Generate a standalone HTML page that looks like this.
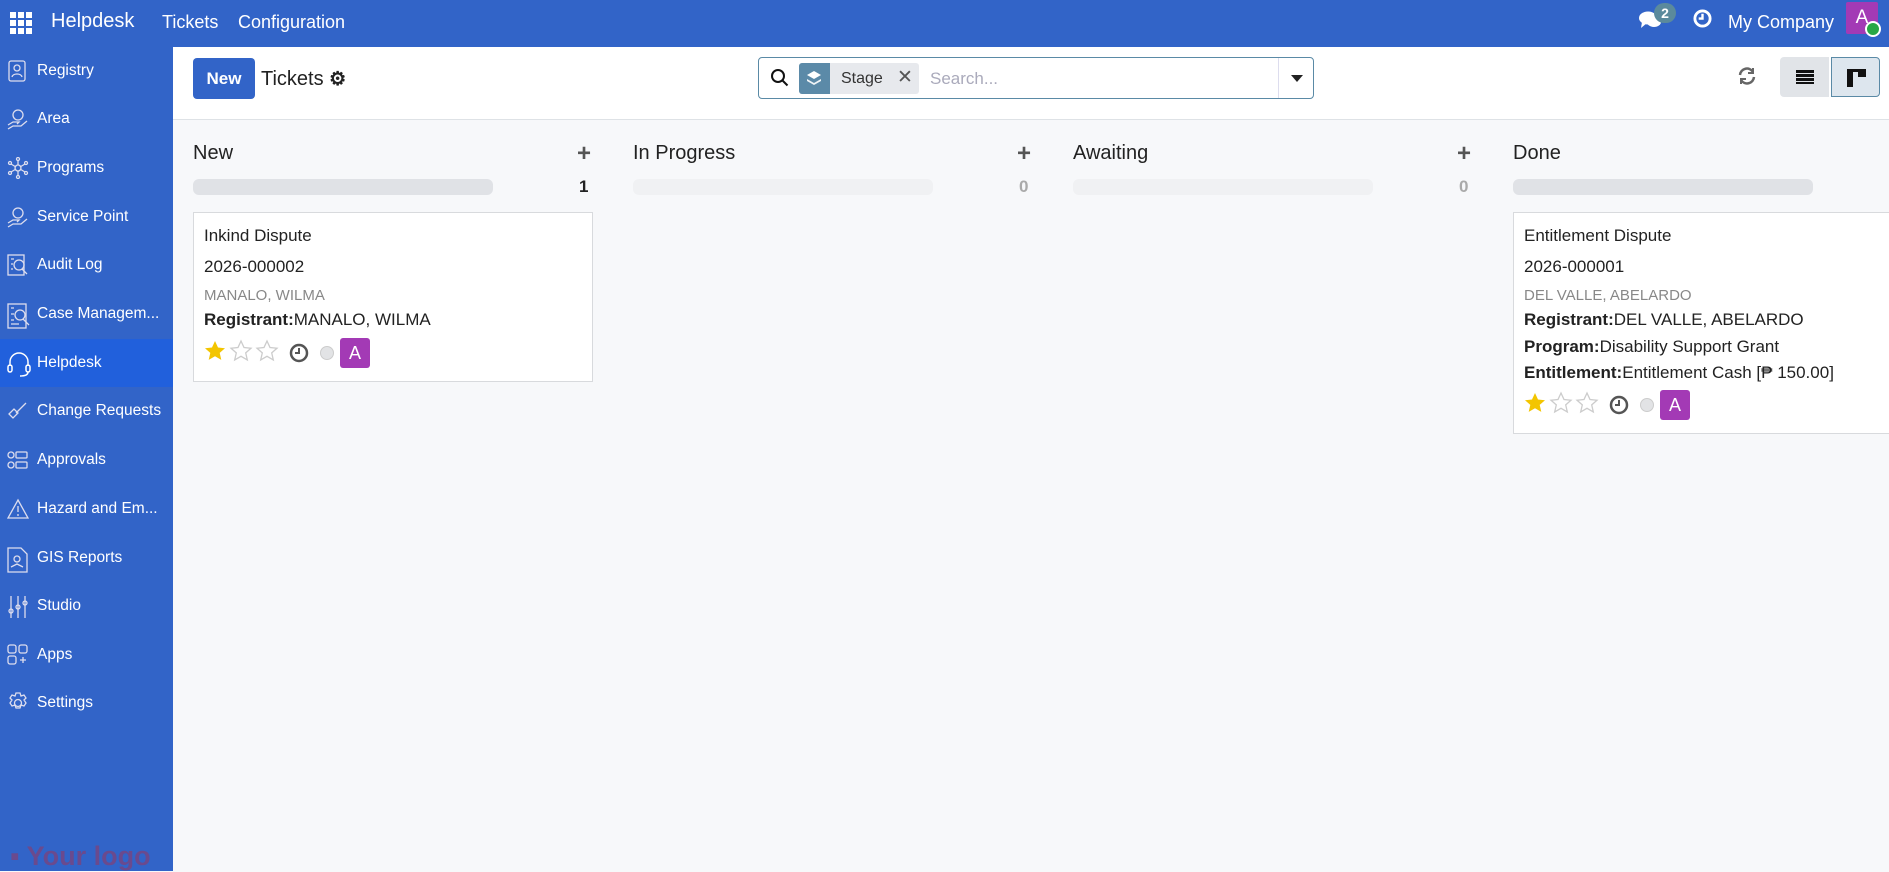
<!DOCTYPE html>
<html><head><meta charset="utf-8"><style>
*{box-sizing:border-box;margin:0;padding:0}
body{width:1889px;height:871px;overflow:hidden;font-family:"Liberation Sans",sans-serif;background:#f7f8fa;position:relative;color:#222}
.top{position:absolute;left:0;top:0;width:1889px;height:47px;background:#3264c8;color:#fff}
.top span{position:absolute;top:12px;font-size:18px}
.side{position:absolute;left:0;top:47px;width:173px;height:824px;background:#3264c8;color:#fff}
.si{position:absolute;left:0;width:173px;height:48px;font-size:15.5px;line-height:48px;padding-left:37px;white-space:nowrap}
.si svg{position:absolute;left:7px;top:13px}
.si.act{background:#2160dc}
.cp{position:absolute;left:173px;top:47px;width:1716px;height:73px;background:#fff;border-bottom:1px solid #dee2e6}
.col{position:absolute;top:120px;width:400px}
.ch{position:absolute;top:22px;left:0;font-size:20px;font-weight:500;color:#222}
.plus{position:absolute;top:20px;left:384px;font-size:24px;font-weight:bold;color:#555}
.bar{position:absolute;top:59px;left:0;width:300px;height:16px;border-radius:6px;background:#e0e2e6}
.bar.l{background:#f0f1f3}
.cnt{position:absolute;top:57px;left:386px;font-size:17px;font-weight:bold;color:#222}
.cnt.z{color:#aaa}
.card{position:absolute;top:92px;left:0;width:400px;background:#fff;border:1px solid #d8dadd;padding:10px 10px 0 10px;font-size:17px;color:#222}
.card div{white-space:nowrap}
.card b{font-weight:bold}
.foot{height:44px;position:relative}
</style></head><body>
<div class="top">
<svg style="position:absolute;left:10px;top:12px" width="22" height="22" viewBox="0 0 22 22" fill="#fff"><rect x="0" y="0" width="6" height="6"/><rect x="8" y="0" width="6" height="6"/><rect x="16" y="0" width="6" height="6"/><rect x="0" y="8" width="6" height="6"/><rect x="8" y="8" width="6" height="6"/><rect x="16" y="8" width="6" height="6"/><rect x="0" y="16" width="6" height="6"/><rect x="8" y="16" width="6" height="6"/><rect x="16" y="16" width="6" height="6"/></svg>
<span style="left:51px;font-size:20px;top:10px">Helpdesk</span>
<span style="left:162px">Tickets</span>
<span style="left:238px">Configuration</span>
<svg style="position:absolute;left:1639px;top:9px" width="24" height="22" viewBox="0 0 24 22" fill="#fff"><ellipse cx="9" cy="9" rx="9" ry="6.5"/><path d="M3 13 L2 19 L8 14Z"/><ellipse cx="15" cy="13" rx="7" ry="5"/></svg>
<div style="position:absolute;left:1654px;top:3px;width:22px;height:20px;border-radius:10px;background:#5b8a9c;color:#fff;font-size:14px;font-weight:bold;text-align:center;line-height:20px">2</div>
<svg style="position:absolute;left:1693px;top:9px" width="19" height="19" viewBox="0 0 20 20"><circle cx="10" cy="10" r="8" fill="none" stroke="#fff" stroke-width="3"/><path d="M10 5v5h-4" stroke="#fff" stroke-width="2.5" fill="none"/></svg>
<span style="left:1728px">My Company</span>
<div style="position:absolute;left:1846px;top:2px;width:32px;height:32px;background:#a33ab5;color:#fff;font-size:19px;text-align:center;line-height:32px;border-radius:2px">A</div>
<div style="position:absolute;left:1865px;top:21px;width:16px;height:16px;border-radius:50%;background:#28a745;border:2px solid #fff"></div>
</div>
<div class="side">
<div class="si" style="top:0"><svg width="20" height="22" viewBox="0 0 20 22" fill="none" stroke="#dde" stroke-width="1.3"><rect x="2" y="1" width="16" height="20" rx="2"/><circle cx="10" cy="8" r="3"/><path d="M5 17c1-4 9-4 10 0"/></svg>Registry</div>
<div class="si" style="top:48px"><svg width="22" height="22" viewBox="0 0 22 22" fill="none" stroke="#dde" stroke-width="1.3"><circle cx="11" cy="7" r="5"/><path d="M1 17l5-3h6l-2 2 M1 21l5-3 8 0 6-5"/></svg>Area</div>
<div class="si" style="top:97px"><svg width="22" height="22" viewBox="0 0 22 22" fill="none" stroke="#dde" stroke-width="1.3"><circle cx="11" cy="11" r="3"/><circle cx="11" cy="2" r="1.5"/><circle cx="11" cy="20" r="1.5"/><circle cx="3" cy="6" r="1.5"/><circle cx="19" cy="6" r="1.5"/><circle cx="3" cy="16" r="1.5"/><circle cx="19" cy="16" r="1.5"/><path d="M11 4v4M11 14v4M4 7l5 3M18 7l-5 3M4 15l5-3M18 15l-5-3"/></svg>Programs</div>
<div class="si" style="top:146px"><svg width="22" height="22" viewBox="0 0 22 22" fill="none" stroke="#dde" stroke-width="1.3"><circle cx="11" cy="7" r="5"/><path d="M1 17l5-3h6l-2 2 M1 21l5-3 8 0 6-5"/></svg>Service Point</div>
<div class="si" style="top:194px"><svg width="22" height="22" viewBox="0 0 22 22" fill="none" stroke="#dde" stroke-width="1.3"><rect x="1" y="1" width="16" height="20"/><circle cx="12" cy="11" r="5"/><path d="M15 15l5 5M4 5h3M4 10h2M4 15h2"/></svg>Audit Log</div>
<div class="si" style="top:243px"><svg width="24" height="26" viewBox="0 0 24 26" fill="none" stroke="#dde" stroke-width="1.3"><rect x="1" y="1" width="18" height="24"/><circle cx="13" cy="12" r="5"/><path d="M16 16l6 6M4 5h3M4 11h3M4 17h3M4 21h8"/></svg>Case Managem...</div>
<div class="si act" style="top:292px"><svg width="24" height="26" viewBox="0 0 24 26" fill="none" stroke="#fff" stroke-width="1.5"><path d="M3 14V10a9 9 0 0 1 18 0v4"/><rect x="1" y="13" width="4" height="7" rx="2"/><rect x="19" y="13" width="4" height="7" rx="2"/><path d="M21 20c0 3-4 4-8 4"/></svg>Helpdesk</div>
<div class="si" style="top:340px"><svg width="22" height="22" viewBox="0 0 22 22" fill="none" stroke="#dde" stroke-width="1.3"><path d="M2 14l5-5 4 4-5 5z M9 13l10-10"/></svg>Change Requests</div>
<div class="si" style="top:389px"><svg width="22" height="22" viewBox="0 0 22 22" fill="none" stroke="#dde" stroke-width="1.3"><circle cx="4" cy="6" r="3"/><circle cx="4" cy="16" r="3"/><rect x="9" y="3" width="11" height="6" rx="1"/><rect x="9" y="13" width="11" height="6" rx="1"/></svg>Approvals</div>
<div class="si" style="top:438px"><svg width="22" height="22" viewBox="0 0 22 22" fill="none" stroke="#dde" stroke-width="1.3"><path d="M11 2l10 18H1z M11 8v6 M11 16v2"/></svg>Hazard and Em...</div>
<div class="si" style="top:487px"><svg width="22" height="26" viewBox="0 0 22 26" fill="none" stroke="#dde" stroke-width="1.3"><path d="M1 1h13l6 6v18H1z"/><circle cx="10" cy="12" r="3"/><path d="M4 20l6-3 6 3"/></svg>GIS Reports</div>
<div class="si" style="top:535px"><svg width="22" height="24" viewBox="0 0 22 24" fill="none" stroke="#dde" stroke-width="1.3"><path d="M4 1v22M11 1v22M18 1v22"/><circle cx="4" cy="16" r="2"/><circle cx="11" cy="12" r="2"/><circle cx="18" cy="8" r="2"/></svg>Studio</div>
<div class="si" style="top:584px"><svg width="22" height="22" viewBox="0 0 22 22" fill="none" stroke="#dde" stroke-width="1.3"><rect x="1" y="1" width="8" height="8" rx="2"/><rect x="12" y="1" width="8" height="8" rx="2"/><rect x="1" y="12" width="8" height="8" rx="2"/><path d="M16 13v6M13 16h6"/></svg>Apps</div>
<div class="si" style="top:632px"><svg width="22" height="22" viewBox="0 0 22 22" fill="none" stroke="#dde" stroke-width="1.3"><circle cx="11" cy="11" r="3.5"/><path d="M9 1h4l1 3 3-1 2 3-2 2 2 3-2 3-3-1-1 3h-4l-1-3-3 1-2-3 2-3-2-2 2-3 3 1z"/></svg>Settings</div>
<div style="position:absolute;left:10px;top:794px;font-size:27px;font-weight:bold;color:#6a4a8e;white-space:nowrap">▪ Your logo</div>
</div>
<div class="cp">
<div style="position:absolute;left:20px;top:11px;width:62px;height:41px;background:#3264c8;border-radius:4px;color:#fff;font-weight:bold;font-size:17px;text-align:center;line-height:41px">New</div>
<div style="position:absolute;left:88px;top:21px;font-size:20px;color:#222">Tickets <span style="font-size:19px;font-weight:bold">⚙</span></div>
<div style="position:absolute;left:585px;top:10px;width:556px;height:42px;border:1px solid #5a8aa6;border-radius:4px;background:#fff">
<svg style="position:absolute;left:11px;top:10px" width="20" height="20" viewBox="0 0 20 20" fill="none" stroke="#111" stroke-width="2"><circle cx="8" cy="8" r="6"/><path d="M12.5 12.5l5 5"/></svg>
<div style="position:absolute;left:40px;top:5px;width:120px;height:31px;background:#e7e9ed;border-radius:3px">
<div style="position:absolute;left:0;top:0;width:31px;height:31px;background:#5b8aa8;border-radius:3px 0 0 3px"><svg style="position:absolute;left:7px;top:7px" width="16" height="17" viewBox="0 0 16 17" fill="#fff"><path d="M8 1l7 4-7 4-7-4z"/><path d="M1 9l7 4 7-4v2l-7 4-7-4z" opacity=".9"/></svg></div>
<span style="position:absolute;left:42px;top:7px;font-size:16px;color:#333">Stage</span>
<span style="position:absolute;left:98px;top:3px;font-size:19px;color:#555">✕</span></div>
<span style="position:absolute;left:171px;top:11px;font-size:17px;color:#aab">Search...</span>
<div style="position:absolute;left:519px;top:0;width:1px;height:40px;background:#dde"></div>
<div style="position:absolute;left:532px;top:17px;width:0;height:0;border-left:6px solid transparent;border-right:6px solid transparent;border-top:7px solid #222"></div>
</div>
<svg style="position:absolute;left:1565px;top:20px" width="18" height="18" viewBox="0 0 18 18" fill="none" stroke="#666" stroke-width="2.5"><path d="M2 8a7 7 0 0 1 13-3M16 10a7 7 0 0 1-13 3"/><path d="M15 1v5h-5M3 17v-5h5" stroke-width="2"/></svg>
<div style="position:absolute;left:1607px;top:10px;width:49px;height:40px;background:#e1e4e8;border-radius:4px 0 0 4px"><div style="position:absolute;left:16px;top:13px;width:18px;height:14px;background:repeating-linear-gradient(#111 0 3px,transparent 3px 4px)"></div></div>
<div style="position:absolute;left:1658px;top:10px;width:49px;height:40px;background:#dde6ee;border:1px solid #5a8aa6;border-radius:0 4px 4px 0"><div style="position:absolute;left:15px;top:11px;width:6px;height:18px;background:#111"></div><div style="position:absolute;left:15px;top:11px;width:19px;height:3px;background:#111"></div><div style="position:absolute;left:26px;top:11px;width:8px;height:8px;background:#111"></div></div>
</div>

<div class="col" style="left:193px"><div class="ch">New</div><div class="plus">+</div><div class="bar"></div><div class="cnt">1</div>
<div class="card" style="height:170px">
<div style="line-height:26px;font-size:17px">Inkind Dispute</div>
<div style="line-height:36px">2026-000002</div>
<div style="line-height:21px;font-size:15px;color:#888">MANALO, WILMA</div>
<div style="line-height:28px"><b>Registrant:</b>MANALO, WILMA</div>
<div class="foot"><svg width="170" height="30" viewBox="0 0 170 30" style="position:absolute;left:-1px;top:4px"><path d="M12 3l3 6.5 7 .7-5.3 4.7 1.6 7-6.3-3.6-6.3 3.6 1.6-7L2 10.2l7-.7z" fill="#f3c500"/><path d="M38 3l3 6.5 7 .7-5.3 4.7 1.6 7-6.3-3.6-6.3 3.6 1.6-7L28 10.2l7-.7z" fill="none" stroke="#ccc" stroke-width="1.3"/><path d="M64 3l3 6.5 7 .7-5.3 4.7 1.6 7-6.3-3.6-6.3 3.6 1.6-7L54 10.2l7-.7z" fill="none" stroke="#ccc" stroke-width="1.3"/><circle cx="96" cy="15" r="8" fill="none" stroke="#555" stroke-width="2.5"/><path d="M96 10v5h-4" stroke="#555" stroke-width="2" fill="none"/><circle cx="124" cy="15" r="6.5" fill="#e2e3e5" stroke="#ccc"/></svg>
<div style="position:absolute;left:136px;top:4px;width:30px;height:30px;background:#a33ab5;border-radius:3px;color:#fff;text-align:center;line-height:30px;font-size:18px">A</div></div>
</div></div>

<div class="col" style="left:633px"><div class="ch">In Progress</div><div class="plus">+</div><div class="bar l"></div><div class="cnt z">0</div></div>
<div class="col" style="left:1073px"><div class="ch">Awaiting</div><div class="plus">+</div><div class="bar l"></div><div class="cnt z">0</div></div>
<div class="col" style="left:1513px"><div class="ch">Done</div><div class="bar"></div>
<div class="card" style="height:222px">
<div style="line-height:26px;font-size:17px">Entitlement Dispute</div>
<div style="line-height:36px">2026-000001</div>
<div style="line-height:21px;font-size:15px;color:#888">DEL VALLE, ABELARDO</div>
<div style="line-height:28px"><b>Registrant:</b>DEL VALLE, ABELARDO</div>
<div style="line-height:26px"><b>Program:</b>Disability Support Grant</div>
<div style="line-height:26px"><b>Entitlement:</b>Entitlement Cash [₱ 150.00]</div>
<div class="foot"><svg width="170" height="30" viewBox="0 0 170 30" style="position:absolute;left:-1px;top:4px"><path d="M12 3l3 6.5 7 .7-5.3 4.7 1.6 7-6.3-3.6-6.3 3.6 1.6-7L2 10.2l7-.7z" fill="#f3c500"/><path d="M38 3l3 6.5 7 .7-5.3 4.7 1.6 7-6.3-3.6-6.3 3.6 1.6-7L28 10.2l7-.7z" fill="none" stroke="#ccc" stroke-width="1.3"/><path d="M64 3l3 6.5 7 .7-5.3 4.7 1.6 7-6.3-3.6-6.3 3.6 1.6-7L54 10.2l7-.7z" fill="none" stroke="#ccc" stroke-width="1.3"/><circle cx="96" cy="15" r="8" fill="none" stroke="#555" stroke-width="2.5"/><path d="M96 10v5h-4" stroke="#555" stroke-width="2" fill="none"/><circle cx="124" cy="15" r="6.5" fill="#e2e3e5" stroke="#ccc"/></svg>
<div style="position:absolute;left:136px;top:4px;width:30px;height:30px;background:#a33ab5;border-radius:3px;color:#fff;text-align:center;line-height:30px;font-size:18px">A</div></div>
</div></div>
</body></html>
